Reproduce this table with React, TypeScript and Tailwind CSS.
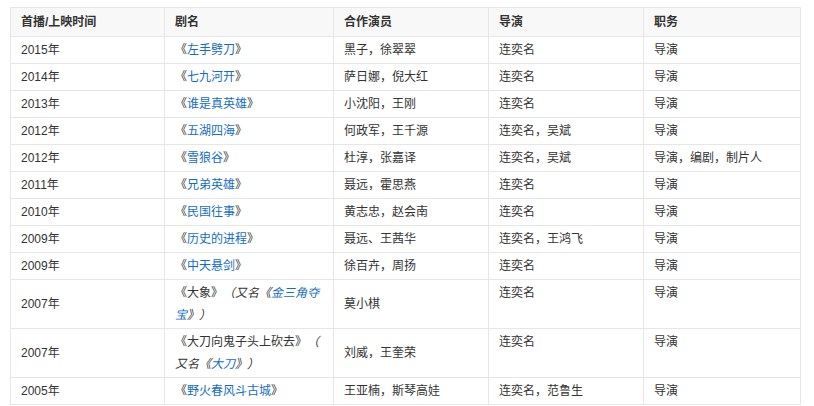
type Row = {
  year: string;
  title: React.ReactNode;
  actors: string;
  director: string;
  role: string;
};

const link = "text-[#136ec2]";

const rows: Row[] = [
  { year: "2015年", title: <>《<span className={link}>左手劈刀</span>》</>, actors: "黑子，徐翠翠", director: "连奕名", role: "导演" },
  { year: "2014年", title: <>《<span className={link}>七九河开</span>》</>, actors: "萨日娜，倪大红", director: "连奕名", role: "导演" },
  { year: "2013年", title: <>《<span className={link}>谁是真英雄</span>》</>, actors: "小沈阳，王刚", director: "连奕名", role: "导演" },
  { year: "2012年", title: <>《<span className={link}>五湖四海</span>》</>, actors: "何政军，王千源", director: "连奕名，吴斌", role: "导演" },
  { year: "2012年", title: <>《<span className={link}>雪狼谷</span>》</>, actors: "杜淳，张嘉译", director: "连奕名，吴斌", role: "导演，编剧，制片人" },
  { year: "2011年", title: <>《<span className={link}>兄弟英雄</span>》</>, actors: "聂远，霍思燕", director: "连奕名", role: "导演" },
  { year: "2010年", title: <>《<span className={link}>民国往事</span>》</>, actors: "黄志忠，赵会南", director: "连奕名", role: "导演" },
  { year: "2009年", title: <>《<span className={link}>历史的进程</span>》</>, actors: "聂远、王茜华", director: "连奕名，王鸿飞", role: "导演" },
  { year: "2009年", title: <>《<span className={link}>中天悬剑</span>》</>, actors: "徐百卉，周扬", director: "连奕名", role: "导演" },
  {
    year: "2007年",
    title: (
      <>
        《大象》<i>（又名《<span className={link}>金三角夺宝</span>》）</i>
      </>
    ),
    actors: "莫小棋",
    director: "连奕名",
    role: "导演",
  },
  {
    year: "2007年",
    title: (
      <>
        《大刀向鬼子头上砍去》
        <i>
          （<br />
          又名《<span className={link}>大刀</span>》）
        </i>
      </>
    ),
    actors: "刘威，王奎荣",
    director: "连奕名",
    role: "导演",
  },
  { year: "2005年", title: <>《<span className={link}>野火春风斗古城</span>》</>, actors: "王亚楠，斯琴高娃", director: "连奕名，范鲁生", role: "导演" },
];

const cell = "border border-[#e6e6e6] px-[10px] py-[2px] text-left";

export default function App() {
  return (
    <div className="min-h-[406px] bg-white pl-[10px] pt-[7px] font-['Liberation_Sans','Noto_Sans_CJK_SC',sans-serif] text-[12px] leading-[22px] text-[#333] [text-spacing-trim:space-all]">
      <table className="w-[790px] table-fixed border-collapse">
        <colgroup>
          <col className="w-[154px]" />
          <col className="w-[169px]" />
          <col className="w-[155px]" />
          <col className="w-[155px]" />
          <col className="w-[157px]" />
        </colgroup>
        <thead>
          <tr className="bg-[#f8f8f8]">
            {["首播/上映时间", "剧名", "合作演员", "导演", "职务"].map((h) => (
              <th key={h} className={`${cell} py-[3px] font-bold`}>
                {h}
              </th>
            ))}
          </tr>
        </thead>
        <tbody>
          {rows.map((r, i) => (
            <tr key={i}>
              <td className={`${cell} align-middle`}>{r.year}</td>
              <td className={`${cell} align-middle`}>{r.title}</td>
              <td className={`${cell} align-middle`}>{r.actors}</td>
              <td className={`${cell} align-top`}>{r.director}</td>
              <td className={`${cell} align-top`}>{r.role}</td>
            </tr>
          ))}
        </tbody>
      </table>
    </div>
  );
}
